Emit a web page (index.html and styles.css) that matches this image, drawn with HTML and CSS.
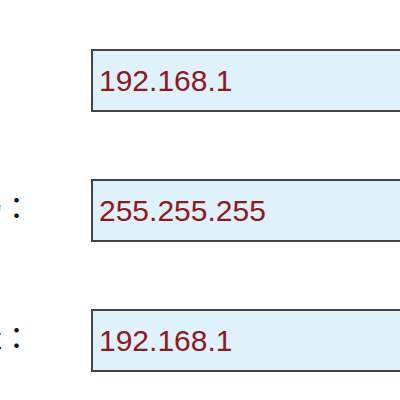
FILE: index.html
```html
<!DOCTYPE html>
<html lang="zh-CN">
<head>
    <meta charset="UTF-8">
    <meta name="viewport" content="width=device-width, initial-scale=1.0">
    <title>IP 地址</title>
    <link rel="stylesheet" href="styles.css">
</head>
<body>
    <div class="form">
        <div class="row">
            <div class="label">IP地址：</div>
            <div class="field">192.168.1</div>
        </div>
        <div class="row">
            <div class="label">子网掩码：</div>
            <div class="field">255.255.255</div>
        </div>
        <div class="row">
            <div class="label">网络地址：</div>
            <div class="field">192.168.1</div>
        </div>
    </div>
</body>
</html>
```

FILE: styles.css
```css
body {
    margin: 0;
    overflow: hidden;
    background: #fff;
    font-family: "Liberation Sans", Arial, sans-serif;
}
.form {
    display: flex;
    flex-direction: column;
    gap: 67px;
    padding-top: 49px;
    margin-left: -139px;
}
.row {
    display: flex;
    align-items: center;
}
/* 标签 */
.label {
    flex: 0 0 230px;
    font-family: "Noto Sans CJK SC", sans-serif;
    font-size: 30px;
    letter-spacing: 7px;
    color: #111;
    white-space: nowrap;
    margin-top: -14px;
}
/* 输入框 */
.field {
    flex: 0 0 420px;
    height: 59px;
    display: flex;
    align-items: center;
    padding-left: 6px;
    border: 2px solid #444;
    background-color: #dff1fb;
    color: #8c1a1f;
    font-size: 30px;
}
```
